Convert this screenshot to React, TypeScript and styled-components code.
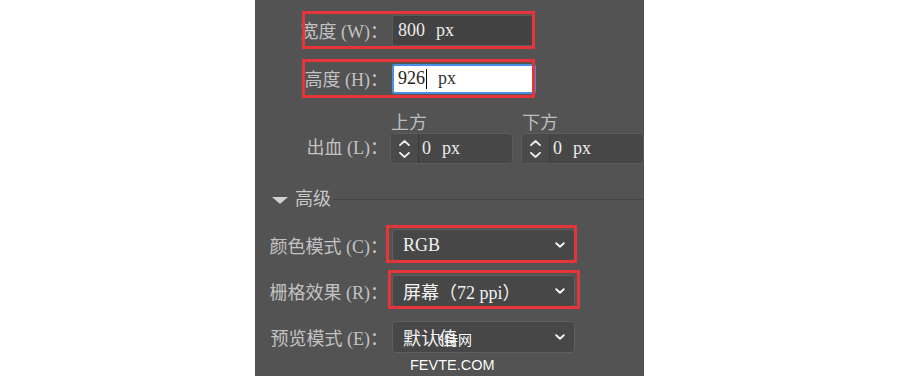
import React from "react";
import styled, { createGlobalStyle } from "styled-components";

const Global = createGlobalStyle`
  html, body { margin: 0; padding: 0; background: #ffffff; }
  body { font-family: "Liberation Serif", "Noto Sans CJK SC", serif; }
`;

const RED = "#e5343a";

const Panel = styled.div`
  position: relative;
  margin-left: 255px;
  width: 389px;
  height: 376px;
  background: #535353;
  overflow: hidden;
  display: flex;
  flex-direction: column;
  font-family: "Liberation Serif", "Noto Sans CJK SC", serif;
  font-size: 18px;
  color: #c4c4c4;
`;

const Row = styled.div<{ $h: number; $mt: number; $mark?: boolean }>`
  position: relative;
  display: flex;
  align-items: center;
  gap: 4px;
  height: ${(p) => p.$h}px;
  margin-top: ${(p) => p.$mt}px;
  flex-shrink: 0;
  ${(p) =>
    p.$mark
      ? `&::after {
    content: "";
    position: absolute;
    left: 47px;
    top: 0;
    width: 233px;
    height: 100%;
    box-sizing: border-box;
    border: 3px solid ${RED};
    pointer-events: none;
  }`
      : ""}
`;

const Label = styled.div`
  width: 133px;
  flex-shrink: 0;
  text-align: right;
  white-space: nowrap;
  line-height: 20px;
  padding-top: 3px;
  color: #c2c2c2;
`;

const TextBox = styled.div<{ $active?: boolean }>`
  box-sizing: border-box;
  width: ${(p) => (p.$active ? 144 : 143)}px;
  height: ${(p) => (p.$active ? 30 : 31)}px;
  display: flex;
  align-items: center;
  padding-left: ${(p) => (p.$active ? 4 : 5)}px;
  border-radius: 3px;
  background: ${(p) => (p.$active ? "#ffffff" : "#434343")};
  border: ${(p) => (p.$active ? "2px solid #4a90e2" : "1px solid #5a5a5a")};
  color: ${(p) => (p.$active ? "#222222" : "#ececec")};
  font-size: 18px;
  flex-shrink: 0;
`;

const Unit = styled.span<{ $dark?: boolean }>`
  margin-left: 11px;
  color: ${(p) => (p.$dark ? "#333333" : "inherit")};
`;

const Caret = styled.span`
  display: inline-block;
  width: 1px;
  height: 20px;
  background: #000;
  margin-left: 1px;
`;

const BleedRow = styled.div`
  display: flex;
  align-items: flex-end;
  gap: 4px;
  margin-top: 17px;
  flex-shrink: 0;
`;

const BleedLabel = styled(Label)`
  height: 31px;
  line-height: 31px;
  padding-top: 0;
  margin-right: -2px;
`;

const BleedGroup = styled.div`
  display: flex;
  gap: 8px;
`;

const BleedCol = styled.div`
  display: flex;
  flex-direction: column;
  gap: 2px;
`;

const SubLabel = styled.div`
  height: 16px;
  line-height: 16px;
  padding-left: 1px;
  color: #bdbdbd;
  white-space: nowrap;
`;

const Stepper = styled.div`
  box-sizing: border-box;
  width: 123px;
  height: 31px;
  display: flex;
  align-items: stretch;
  border: 1px solid #5c5c5c;
  border-radius: 4px;
  background: #474747;
  overflow: hidden;
  flex-shrink: 0;
`;

const Spin = styled.div`
  width: 27px;
  display: flex;
  flex-direction: column;
  align-items: center;
  justify-content: center;
  gap: 6px;
  border-right: 1px solid #3c3c3c;
  background: #4a4a4a;
`;

const StepValue = styled.div`
  display: flex;
  align-items: center;
  padding-left: 3px;
  color: #ececec;
`;

const Section = styled.div`
  display: flex;
  align-items: center;
  height: 20px;
  margin-top: 25px;
  padding-left: 17px;
  flex-shrink: 0;
`;

const Triangle = styled.span`
  width: 0;
  height: 0;
  border-left: 8px solid transparent;
  border-right: 8px solid transparent;
  border-top: 7px solid #d0d0d0;
  margin-top: 2px;
  margin-right: 7px;
`;

const SectionTitle = styled.span`
  color: #c8c8c8;
  line-height: 20px;
`;

const SectionLine = styled.span`
  flex: 1;
  height: 1px;
  background: #464646;
  margin-left: 2px;
`;

const Mark = styled.div<{ $inset: string }>`
  position: relative;
  &::after {
    content: "";
    position: absolute;
    inset: ${(p) => p.$inset};
    border: 3px solid ${RED};
    pointer-events: none;
  }
`;

const Select = styled.div`
  box-sizing: border-box;
  width: 183px;
  height: 32px;
  display: flex;
  align-items: center;
  justify-content: space-between;
  padding: 0 9px 0 10px;
  border: 1px solid #5e5e5e;
  border-radius: 4px;
  background: #474747;
  color: #f2f2f2;
  white-space: nowrap;
`;

const Watermark = styled.div`
  position: absolute;
  left: 155px;
  top: 330px;
  display: flex;
  flex-direction: column;
  align-items: flex-start;
  color: #ffffff;
  font-family: "Liberation Sans", "Noto Sans CJK SC", sans-serif;
  text-shadow: 0 0 1px rgba(0, 0, 0, 0.35);
  pointer-events: none;
`;

const WmCn = styled.span`
  font-size: 14px;
  line-height: 18px;
  margin-left: 20px;
  font-family: "Noto Sans CJK SC", sans-serif;
`;

const WmEn = styled.span`
  font-size: 14.5px;
  line-height: 16px;
  margin-top: 9px;
`;

const Chevron = ({ up }: { up?: boolean }) => (
  <svg width="11" height="6" viewBox="0 0 11 6" fill="none">
    <path
      d={up ? "M1 5.2 L5.5 1 L10 5.2" : "M1 0.8 L5.5 5 L10 0.8"}
      stroke="#f0f0f0"
      strokeWidth="1.8"
      strokeLinecap="round"
      strokeLinejoin="round"
    />
  </svg>
);

const SelectChevron = () => (
  <svg width="10" height="6" viewBox="0 0 10 6" fill="none">
    <path
      d="M1.2 1.2 L5 4.8 L8.8 1.2"
      stroke="#f4f4f4"
      strokeWidth="1.9"
      strokeLinecap="round"
      strokeLinejoin="round"
    />
  </svg>
);

const StepField = ({ value }: { value: string }) => (
  <Stepper>
    <Spin>
      <Chevron up />
      <Chevron />
    </Spin>
    <StepValue>
      {value}
      <Unit>px</Unit>
    </StepValue>
  </Stepper>
);

export default function App() {
  return (
    <>
      <Global />
      <Panel>
        <Row $h={38} $mt={11} $mark>
          <Label>宽度 (W)：</Label>
          <TextBox>
            800<Unit>px</Unit>
          </TextBox>
        </Row>
        <Row $h={39} $mt={10} $mark>
          <Label>高度 (H)：</Label>
          <TextBox $active>
            926
            <Caret />
            <Unit $dark>px</Unit>
          </TextBox>
        </Row>

        <BleedRow>
          <BleedLabel>出血 (L)：</BleedLabel>
          <BleedGroup>
            <BleedCol>
              <SubLabel>上方</SubLabel>
              <StepField value="0" />
            </BleedCol>
            <BleedCol>
              <SubLabel>下方</SubLabel>
              <StepField value="0" />
            </BleedCol>
          </BleedGroup>
        </BleedRow>

        <Section>
          <Triangle />
          <SectionTitle>高级</SectionTitle>
          <SectionLine />
        </Section>

        <Row $h={38} $mt={17}>
          <Label>颜色模式 (C)：</Label>
          <Mark $inset="-4px -2px -2px -6px">
            <Select>
              RGB
              <SelectChevron />
            </Select>
          </Mark>
        </Row>
        <Row $h={38} $mt={8}>
          <Label>栅格效果 (R)：</Label>
          <Mark $inset="-5px -5px -2px -4px">
            <Select>
              屏幕（72 ppi）
              <SelectChevron />
            </Select>
          </Mark>
        </Row>
        <Row $h={38} $mt={8}>
          <Label>预览模式 (E)：</Label>
          <Select>
            默认值
            <SelectChevron />
          </Select>
        </Row>

        <Watermark>
          <WmCn>飞特网</WmCn>
          <WmEn>FEVTE.COM</WmEn>
        </Watermark>
      </Panel>
    </>
  );
}
